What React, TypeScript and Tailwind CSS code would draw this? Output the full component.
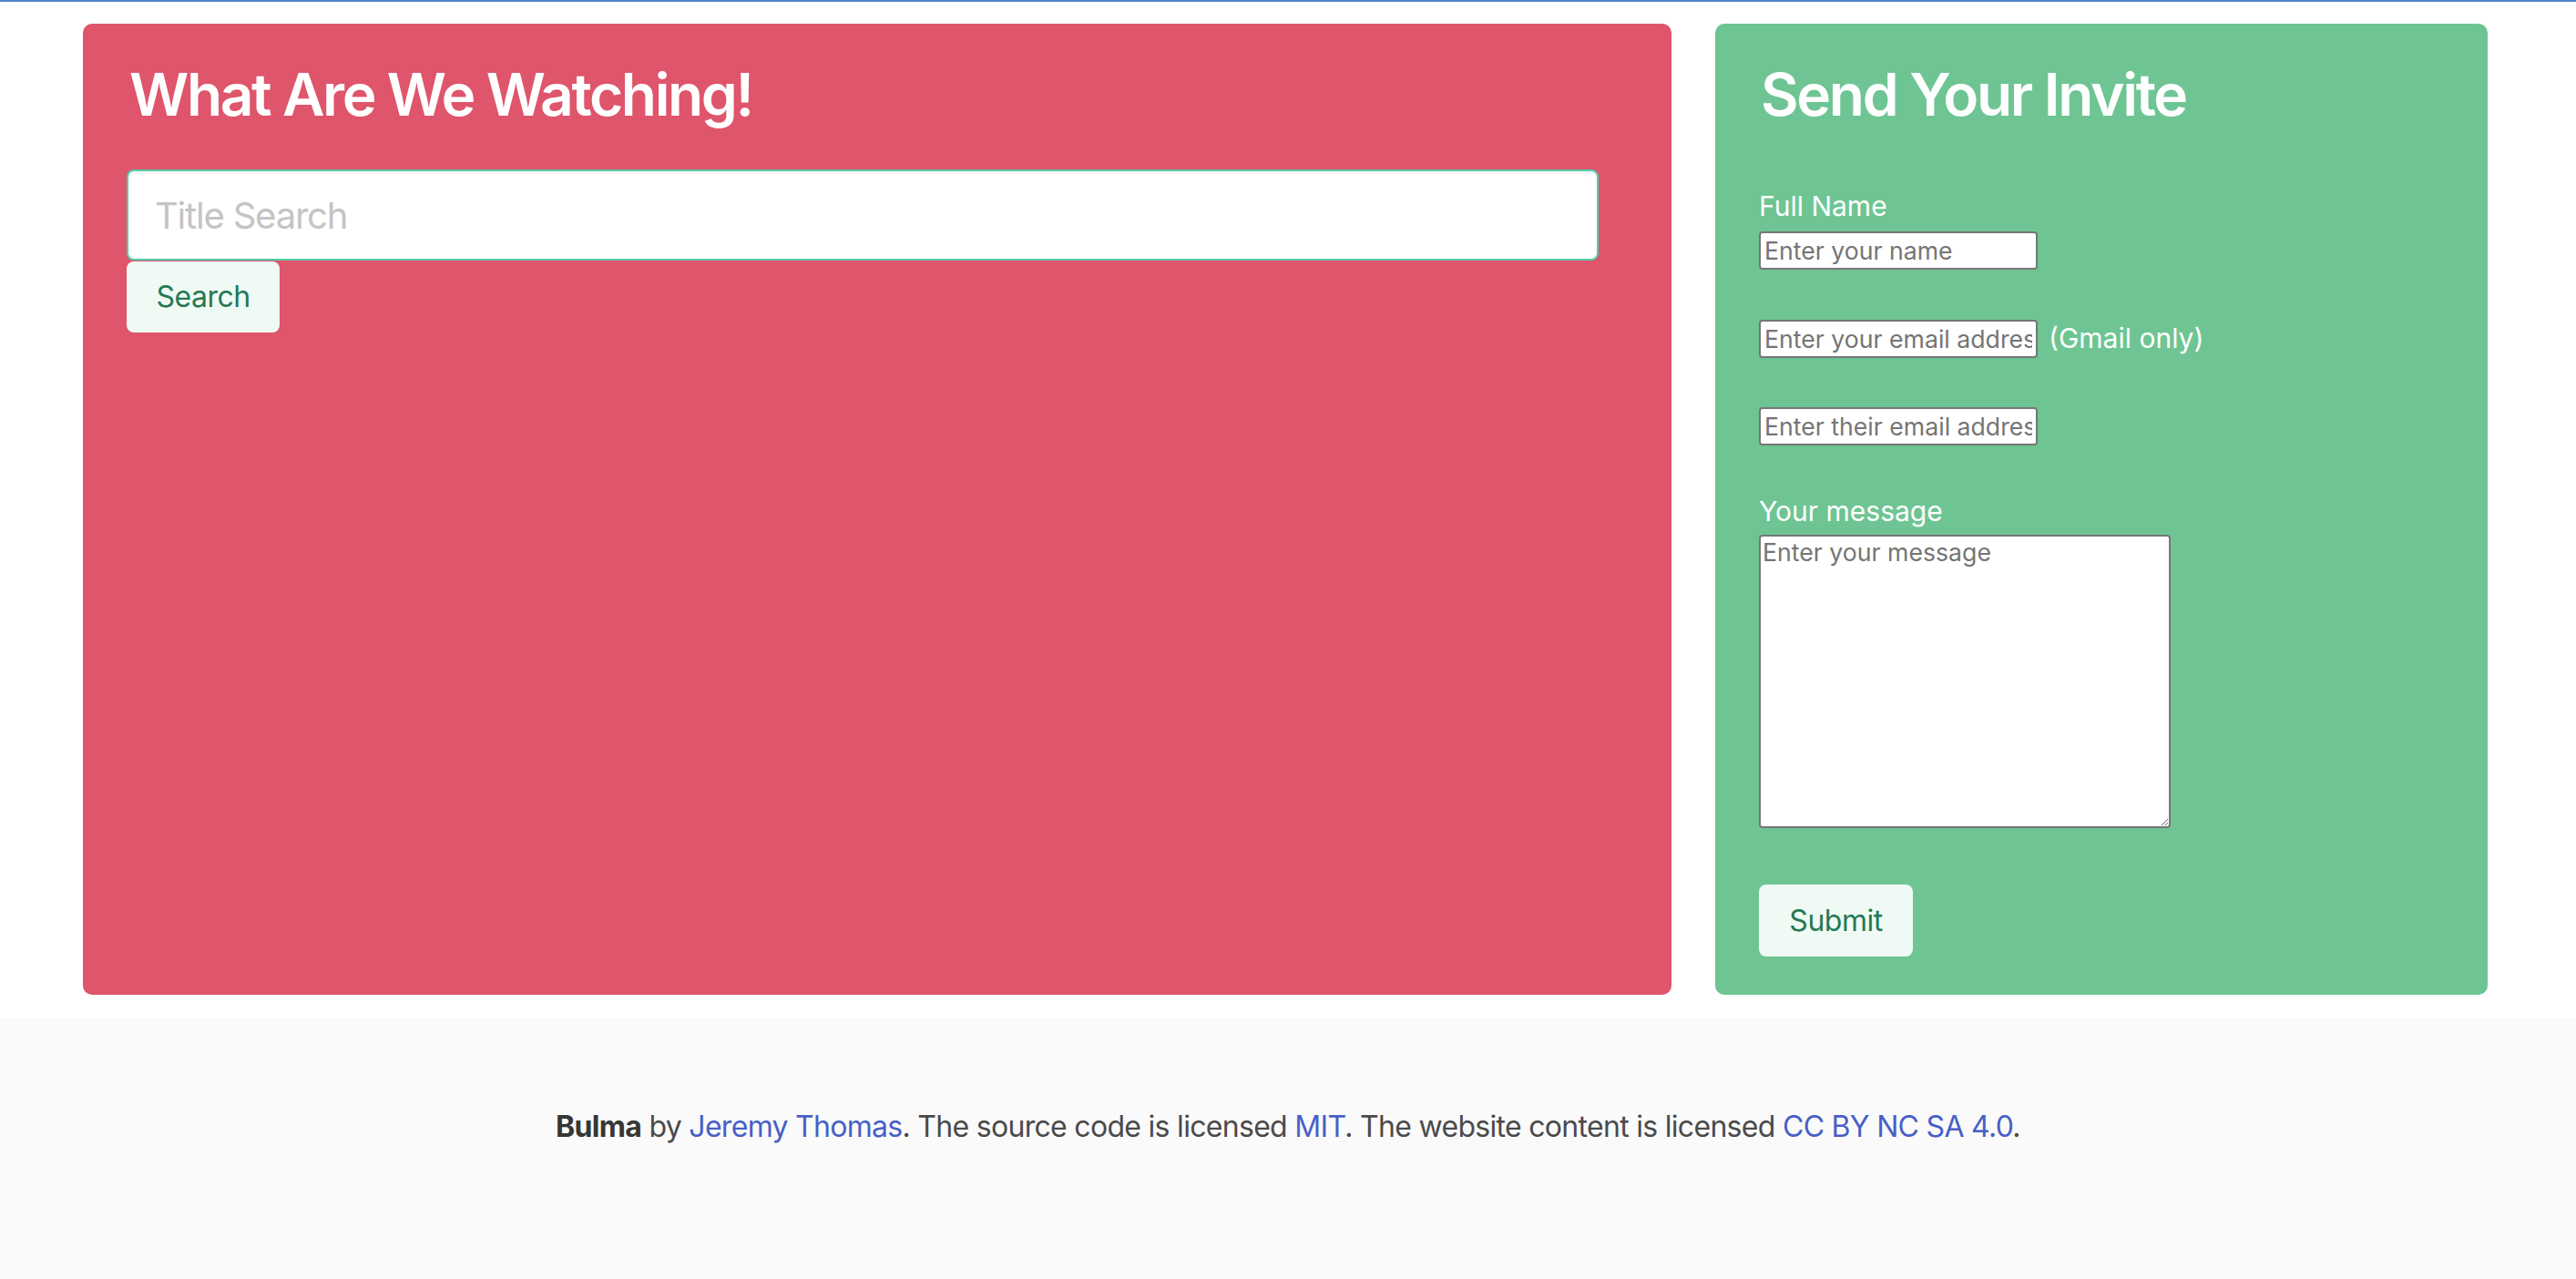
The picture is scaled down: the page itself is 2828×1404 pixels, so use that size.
import React from 'react';

const App = () => {
  return (
    <div className="min-h-screen bg-white font-['Inter','Noto_Sans',sans-serif]">
      <div className="h-[2px] bg-[#4f87c6]" />

      {/* Panels */}
      <section className="pl-[91px] pt-[24px] pb-[25px]">
        <div className="flex gap-[48px] items-stretch">
          {/* Search panel */}
          <div className="w-[1744px] bg-[#df556b] rounded-[10px] px-[48px] pt-[42px]">
            <h1 className="text-[64px] leading-[72px] font-semibold tracking-[-2.4px] text-white ml-[3px]">
              What Are We Watching!
            </h1>
            <input
              type="text"
              placeholder="Title Search"
              className="mt-[46px] block w-[1616px] h-[100px] bg-white border-2 border-[#55cbab] rounded-[8px] pl-[29px] text-[40px] tracking-[-1.2px] text-[#363636] placeholder:text-[#c4c4c4] shadow-[inset_0_2px_4px_rgba(10,10,10,0.05)] outline-none"
            />
            <button className="mt-px h-[78px] w-[168px] bg-[#effaf5] text-[#257953] text-[32px] tracking-[-0.5px] rounded-[8px] flex items-center justify-center">
              Search
            </button>
          </div>

          {/* Invite panel */}
          <div className="w-[848px] bg-[#6ec593] rounded-[10px] px-[48px] pt-[42px] pb-[42px] text-white">
            <h1 className="text-[64px] leading-[72px] font-semibold tracking-[-2.3px] ml-[2px]">Send Your Invite</h1>

            <form className="flex flex-col items-start">
              <label className="mt-[62px] h-[48px] text-[30px] leading-[48px]">Full Name</label>
              <input
                type="text"
                placeholder="Enter your name"
                className="mt-[4px] w-[306px] h-[42px] bg-white border-2 border-[#767676] rounded-[4px] px-[4px] text-[26.67px] text-black placeholder:text-[#757575] outline-none"
              />

              <div className="mt-[55px] h-[42px] flex items-baseline gap-[12px]">
                <input
                  type="email"
                  placeholder="Enter your email address"
                  className="w-[306px] h-[42px] bg-white border-2 border-[#767676] rounded-[4px] px-[4px] text-[26.67px] text-black placeholder:text-[#757575] outline-none"
                />
                <span className="text-[30px] leading-[30px]">(Gmail only)</span>
              </div>

              <input
                type="email"
                placeholder="Enter their email address"
                className="mt-[54px] w-[306px] h-[42px] bg-white border-2 border-[#767676] rounded-[4px] px-[4px] text-[26.67px] text-black placeholder:text-[#757575] outline-none"
              />

              <label className="mt-[48px] h-[48px] text-[30px] leading-[48px]">Your message</label>
              <textarea
                placeholder="Enter your message"
                className="mt-[2px] w-[452px] h-[322px] bg-white border-2 border-[#767676] rounded-[4px] px-[2px] text-[26.67px] leading-[34px] text-black placeholder:text-[#757575] outline-none"
              />

              <button
                type="button"
                className="mt-[62px] h-[79px] w-[169px] bg-[#effaf5] text-[#257953] text-[32px] tracking-[-0.5px] rounded-[8px] flex items-center justify-center"
              >
                Submit
              </button>
            </form>
          </div>
        </div>
      </section>

      {/* Footer */}
      <footer className="bg-[#fafafa] pt-[96px] pb-[192px] text-center text-[32px] leading-[48px] tracking-[-0.7px] text-[#4a4a4a]">
        <p>
          <strong className="text-[#363636] font-bold">Bulma</strong> by{' '}
          <a className="text-[#485fc7]">Jeremy Thomas</a>. The source code is licensed{' '}
          <a className="text-[#485fc7]">MIT</a>. The website content is licensed{' '}
          <a className="text-[#485fc7]">CC BY NC SA 4.0</a>.
        </p>
      </footer>
    </div>
  );
};

export default App;
